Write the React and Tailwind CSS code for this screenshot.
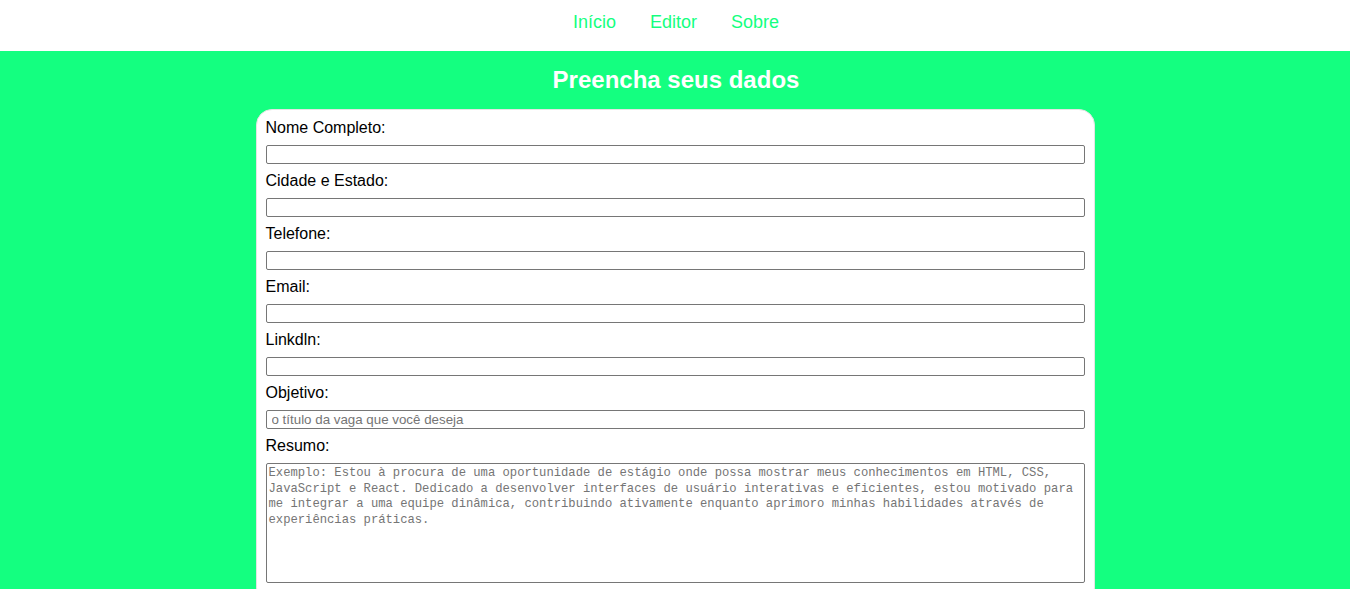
import React from "react";

const fields = ["Nome Completo:", "Cidade e Estado:", "Telefone:", "Email:", "Linkdln:"];

export default function App() {
  return (
    <div className="min-h-[589px] bg-[#14ff80] font-['Liberation_Sans',Arial,sans-serif]">
      <header className="h-[51px] bg-white flex justify-center pt-[12px] pl-[2px]">
        <nav className="flex gap-[34px] text-[18px] leading-[21px] text-[#14ff80]">
          <a href="#" className="block">Início</a>
          <a href="#" className="block">Editor</a>
          <a href="#" className="block">Sobre</a>
        </nav>
      </header>
      <main className="flex flex-col items-center">
        <h1 className="pt-[15px] pl-[2px] text-[24px] leading-[28px] font-bold text-white">Preencha seus dados</h1>
        <div className="mt-[15px] w-[839px] bg-white rounded-[16px] border border-[#e4e4e4] px-[9px] pt-[9px] pb-[20px]">
          {fields.map((f) => (
            <div key={f} className="flex flex-col">
              <label className="text-[16px] leading-[18px] text-black">{f}</label>
              <input className="mt-[8px] mb-[8px] h-[19px] border border-[#767676] rounded-[2px] px-[4px] text-[13.33px] outline-none" />
            </div>
          ))}
          <div className="flex flex-col">
            <label className="text-[16px] leading-[18px] text-black">Objetivo:</label>
            <input
              placeholder="o título da vaga que você deseja"
              className="mt-[8px] mb-[8px] h-[19px] border border-[#767676] rounded-[2px] px-[5px] text-[13.33px] leading-[15px] placeholder:text-[#757575] outline-none font-['Liberation_Sans',Arial,sans-serif]"
            />
          </div>
          <div className="flex flex-col">
            <label className="text-[16px] leading-[18px] text-black">Resumo:</label>
            <textarea
              placeholder="Exemplo: Estou à procura de uma oportunidade de estágio onde possa mostrar meus conhecimentos em HTML, CSS, JavaScript e React. Dedicado a desenvolver interfaces de usuário interativas e eficientes, estou motivado para me integrar a uma equipe dinâmica, contribuindo ativamente enquanto aprimoro minhas habilidades através de experiências práticas."
              className="mt-[8px] h-[120px] resize-none border border-[#767676] rounded-[2px] p-[2px] text-[12.2px] leading-[15.6px] placeholder:text-[#757575] outline-none font-['Liberation_Mono',monospace]"
            />
          </div>
        </div>
      </main>
    </div>
  );
}
